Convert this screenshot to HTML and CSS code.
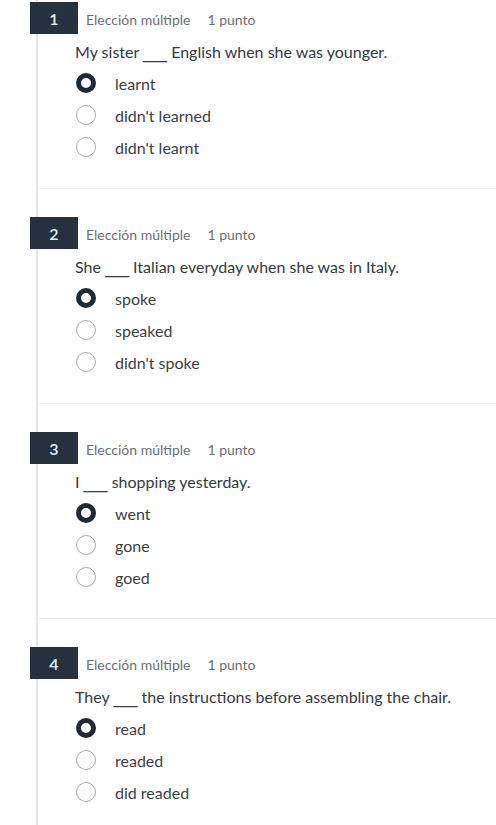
FILE: index.html
```html
<!DOCTYPE html>
<html lang="es">
<head>
<meta charset="utf-8">
<title>Quiz</title>
<link rel="stylesheet" href="styles.css">
</head>
<body>
<div class="quiz">
  <section class="question">
    <div class="q-head"><span class="badge">1</span><span class="type">Elección múltiple</span><span class="points">1 punto</span></div>
    <p class="q-text">My sister <span class="blank">___</span> English when she was younger.</p>
    <ul class="options">
      <li class="option"><span class="radio checked"></span>learnt</li>
      <li class="option"><span class="radio"></span>didn't learned</li>
      <li class="option"><span class="radio"></span>didn't learnt</li>
    </ul>
    <hr class="sep">
  </section>
  <section class="question">
    <div class="q-head"><span class="badge">2</span><span class="type">Elección múltiple</span><span class="points">1 punto</span></div>
    <p class="q-text">She <span class="blank">___</span> Italian everyday when she was in Italy.</p>
    <ul class="options">
      <li class="option"><span class="radio checked"></span>spoke</li>
      <li class="option"><span class="radio"></span>speaked</li>
      <li class="option"><span class="radio"></span>didn't spoke</li>
    </ul>
    <hr class="sep">
  </section>
  <section class="question">
    <div class="q-head"><span class="badge">3</span><span class="type">Elección múltiple</span><span class="points">1 punto</span></div>
    <p class="q-text">I <span class="blank">___</span> shopping yesterday.</p>
    <ul class="options">
      <li class="option"><span class="radio checked"></span>went</li>
      <li class="option"><span class="radio"></span>gone</li>
      <li class="option"><span class="radio"></span>goed</li>
    </ul>
    <hr class="sep">
  </section>
  <section class="question">
    <div class="q-head"><span class="badge">4</span><span class="type">Elección múltiple</span><span class="points">1 punto</span></div>
    <p class="q-text">They <span class="blank">___</span> the instructions before assembling the chair.</p>
    <ul class="options">
      <li class="option"><span class="radio checked"></span>read</li>
      <li class="option"><span class="radio"></span>readed</li>
      <li class="option"><span class="radio"></span>did readed</li>
    </ul>
  </section>
</div>
</body>
</html>
```
FILE: styles.css
```css
html, body {
  margin: 0;
  padding: 0;
  background: #ffffff;
}
body {
  font-family: Lato, "Open Sans", "Liberation Sans", sans-serif;
  color: #333a40;
  overflow: hidden;
}
.quiz {
  margin-left: 36px;
  border-left: 2px solid #e6e6e6;
  min-height: 825px;
}
.question {
  height: 215px;
  padding-top: 2px;
  box-sizing: border-box;
}
.q-head {
  display: flex;
  align-items: center;
  height: 32px;
  margin-left: -8px;
}
.badge {
  width: 48px;
  height: 32px;
  background: #243240;
  color: #e4eef0;
  font-size: 16px;
  font-weight: 600;
  display: flex;
  align-items: center;
  justify-content: center;
  padding-top: 1px;
  box-sizing: border-box;
}
.type {
  margin-left: 8px;
  font-size: 14px;
  color: #6b6f73;
  padding-top: 3px;
}
.points {
  margin-left: 17px;
  font-size: 14px;
  color: #6b6f73;
  padding-top: 3px;
}
.q-text {
  margin: 6px 0 3px 37px;
  font-size: 16px;
  line-height: 24px;
  height: 24px;
  color: #333a40;
}
.blank {
  font-family: "DejaVu Sans", sans-serif;
  line-height: 1;
}
.options {
  list-style: none;
  margin: 0;
  padding: 0 0 0 38px;
}
.option {
  display: flex;
  align-items: center;
  height: 32px;
  font-size: 16px;
  color: #3a3f44;
}
.radio {
  width: 20px;
  height: 20px;
  box-sizing: border-box;
  border: 1px solid #a8a8a8;
  border-radius: 50%;
  margin-right: 19px;
  background: #fff;
  flex: none;
}
.radio.checked {
  border: 5px solid #1e2a35;
}
.sep {
  margin: 25px 0 0 1px;
  border: 0;
  border-top: 1px solid #ececec;
  height: 0;
}
```
